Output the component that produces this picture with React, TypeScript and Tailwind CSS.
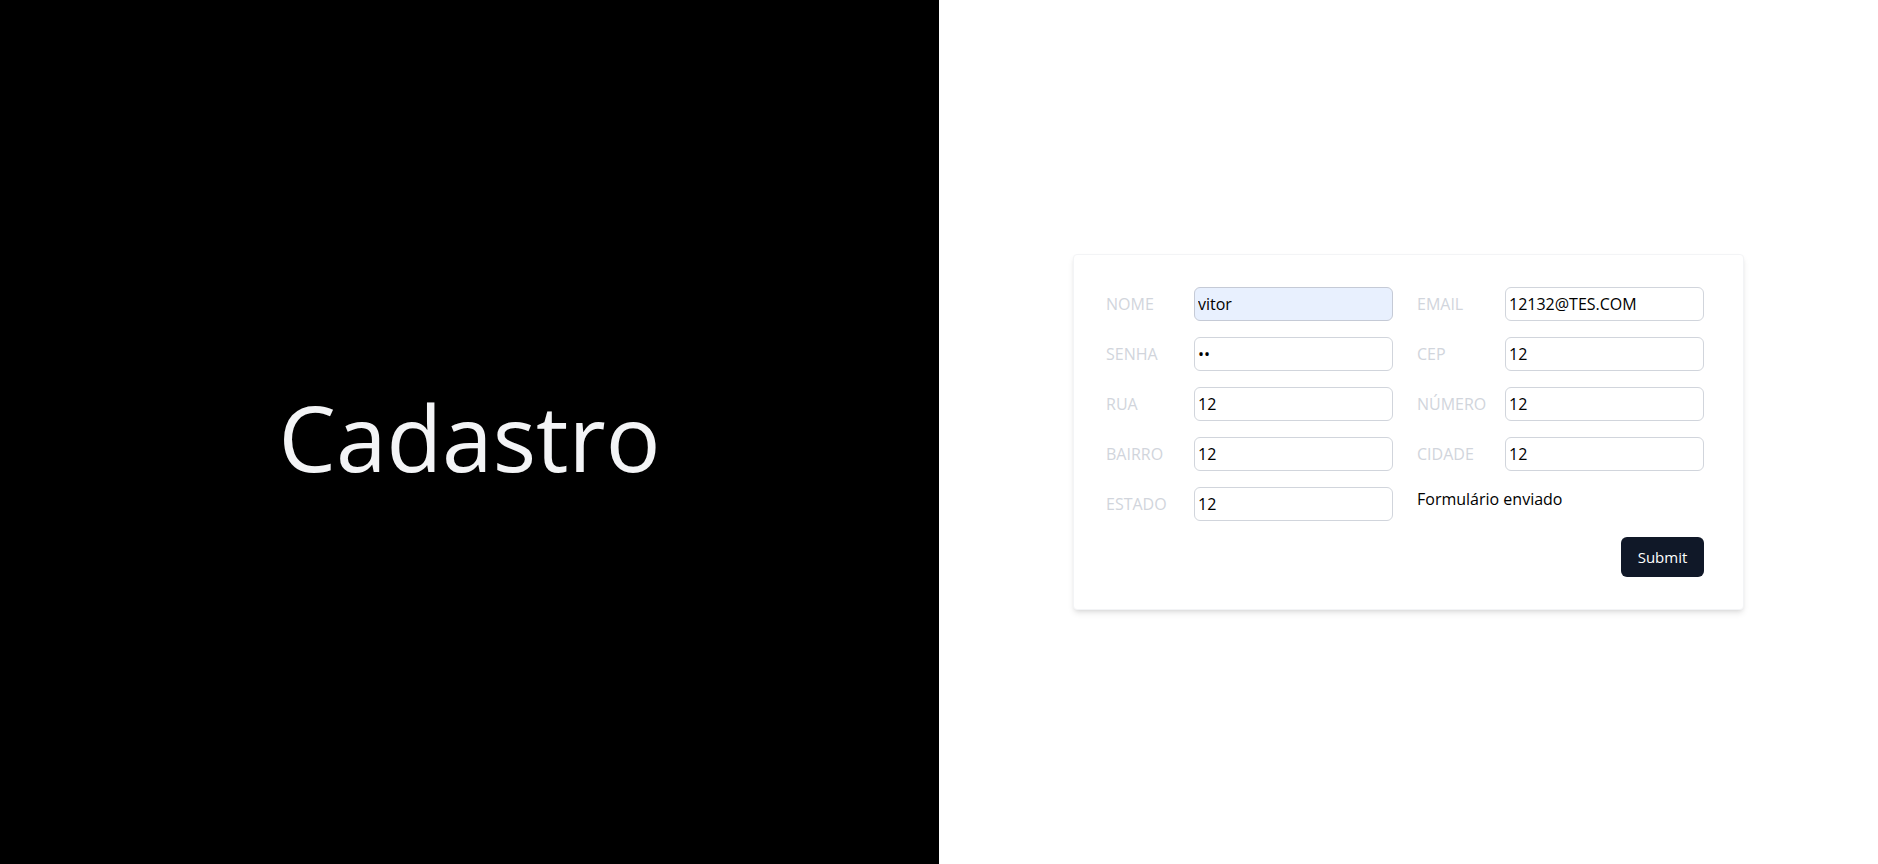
import { Fragment, useState } from 'react'

const fields = [
  { left: { label: 'NOME', value: 'vitor', type: 'text', autofill: true }, right: { label: 'EMAIL', value: '12132@TES.COM', type: 'text' } },
  { left: { label: 'SENHA', value: '12', type: 'password' }, right: { label: 'CEP', value: '12', type: 'text' } },
  { left: { label: 'RUA', value: '12', type: 'text' }, right: { label: 'NÚMERO', value: '12', type: 'text' } },
  { left: { label: 'BAIRRO', value: '12', type: 'text' }, right: { label: 'CIDADE', value: '12', type: 'text' } },
]

type Field = { label: string; value: string; type: string; autofill?: boolean }

function Row({ field }: { field: Field }) {
  const [value, setValue] = useState(field.value)
  return (
    <div className="flex items-center">
      <label className="w-[88px] text-base text-gray-300">{field.label}</label>
      <input
        type={field.type}
        value={value}
        onChange={(e) => setValue(e.target.value)}
        className={
          field.autofill
            ? 'h-[34px] w-[199px] rounded-md border border-[#c5cad6] bg-[#e8f0fe] px-[3px] text-base text-black outline-none'
            : 'h-[34px] w-[199px] rounded-md border border-gray-300 bg-white px-[3px] text-base text-black outline-none'
        }
      />
    </div>
  )
}

export default function App() {
  return (
    <div className="flex h-[864px] w-full font-['Segoe_UI','Open_Sans',sans-serif]">
      <div className="flex w-1/2 items-center justify-center bg-black">
        <h1 className="mt-[10px] text-[91px] font-normal text-gray-100">Cadastro</h1>
      </div>

      <div className="flex w-1/2 items-center justify-center bg-white">
        <form
          onSubmit={(e) => e.preventDefault()}
          className="w-[671px] rounded-sm border border-gray-100 bg-white py-8 pl-8 pr-[39px] shadow-md"
        >
          <div className="grid w-[598px] grid-cols-[287px_287px] gap-x-6 gap-y-4">
            {fields.map((row) => (
              <Fragment key={row.left.label}>
                <Row field={row.left} />
                <Row field={row.right} />
              </Fragment>
            ))}
            <Row field={{ label: 'ESTADO', value: '12', type: 'text' }} />
            <p className="text-base leading-6 text-black">Formulário enviado</p>
          </div>
          <div className="mt-4 flex w-[598px] justify-end">
            <button
              type="submit"
              className="h-10 w-[83px] rounded-md bg-gray-900 text-[15px] text-white"
            >
              Submit
            </button>
          </div>
        </form>
      </div>
    </div>
  )
}
